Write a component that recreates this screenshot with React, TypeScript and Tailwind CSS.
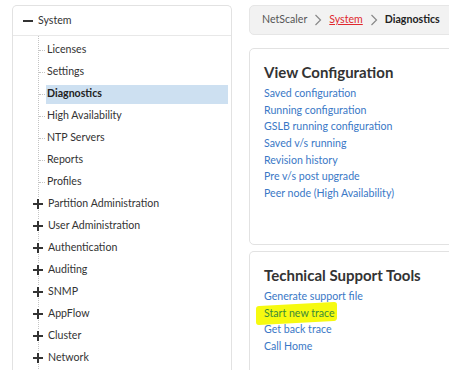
import React from "react";

const leaves = ["Licenses", "Settings", "Diagnostics", "High Availability", "NTP Servers", "Reports", "Profiles"];
const groups = ["Partition Administration", "User Administration", "Authentication", "Auditing", "SNMP", "AppFlow", "Cluster", "Network"];

const viewLinks = [
  "Saved configuration",
  "Running configuration",
  "GSLB running configuration",
  "Saved v/s running",
  "Revision history",
  "Pre v/s post upgrade",
  "Peer node (High Availability)",
];

const Plus = () => (
  <svg width="10" height="10" viewBox="0 0 10 10" className="shrink-0">
    <path d="M0 5h10M5 0v10" stroke="#333" strokeWidth="2" />
  </svg>
);

const Chevron = () => (
  <svg width="8" height="12" viewBox="0 0 8 12" className="mx-[7px]">
    <path d="M1.5 1l5 5-5 5" fill="none" stroke="#888" strokeWidth="1.2" />
  </svg>
);

const Card = ({ title, className, children }: { title: string; className?: string; children: React.ReactNode }) => (
  <div className={`rounded-[5px] border border-[#e2e2e2] bg-white pl-[14px] pt-[13px] ${className ?? ""}`}>
    <h2 className="mb-[3px] text-[15px] font-bold leading-[20px] text-[#333]">{title}</h2>
    <div className="flex flex-col text-[10.6px] leading-[16.67px] text-[#3a78c6]">{children}</div>
  </div>
);

export default function App() {
  return (
    <div
      className="flex h-[370px] w-[449px] overflow-hidden bg-white pl-[12px] pt-[5px] text-[#333]"
      style={{ fontFamily: 'Lato, "Noto Sans", sans-serif' }}
    >
      {/* tree */}
      <div className="w-[220px] shrink-0 rounded-t-[5px] border border-b-0 border-[#e2e2e2]">
        <div className="flex h-[30px] items-center gap-[5px] border-b border-[#e8e8e8] pl-[10px] text-[10.6px]">
          <svg width="10" height="10" viewBox="0 0 10 10">
            <path d="M0 5h10" stroke="#333" strokeWidth="2" />
          </svg>
          System
        </div>
        <div className="relative pt-[3px] text-[10.6px]">
          <div className="absolute bottom-0 left-[25px] top-0 border-l border-dotted border-[#c4c4c4]" />
          {leaves.map((l) => (
            <div key={l} className="flex h-[22px] items-center">
              <span className="ml-[26px] w-[6px] border-t border-dotted border-[#c4c4c4]" />
              <span
                className={
                  l === "Diagnostics"
                    ? "ml-[1px] flex h-[19px] w-[182px] items-center bg-[#cde0f1] pl-[1px] font-bold text-[#222]"
                    : "ml-[2px]"
                }
              >
                {l}
              </span>
            </div>
          ))}
          {groups.map((g) => (
            <div key={g} className="relative flex h-[22px] items-center">
              <span className="ml-[20px] flex items-center bg-white py-[1px]">
                <Plus />
              </span>
              <span className="ml-[5px]">{g}</span>
            </div>
          ))}
        </div>
      </div>

      {/* content */}
      <div className="ml-[17px] flex w-[260px] shrink-0 flex-col">
        <div className="flex h-[30px] items-center rounded-[5px] border border-[#e6e6e6] bg-[#f2f2f2] pl-[12px] text-[10.6px]">
          <span className="text-[#555]">NetScaler</span>
          <Chevron />
          <span className="text-[#e0282e] underline">System</span>
          <Chevron />
          <span className="font-bold text-[#222]">Diagnostics</span>
        </div>

        <Card title="View Configuration" className="mt-[13px] h-[197px]">
          {viewLinks.map((v) => (
            <span key={v}>{v}</span>
          ))}
        </Card>

        <Card title="Technical Support Tools" className="mt-[6px] flex-1 rounded-b-none border-b-0">
          <span>Generate support file</span>
          <span className="relative w-fit">
            <span className="absolute -left-[8px] -right-[2px] -top-[1px] -bottom-[1px] -skew-y-3 rounded-[3px] bg-[#f6fa10]" />
            <span className="relative text-[#3a8a3a]">Start new trace</span>
          </span>
          <span>Get back trace</span>
          <span>Call Home</span>
        </Card>
      </div>
    </div>
  );
}
